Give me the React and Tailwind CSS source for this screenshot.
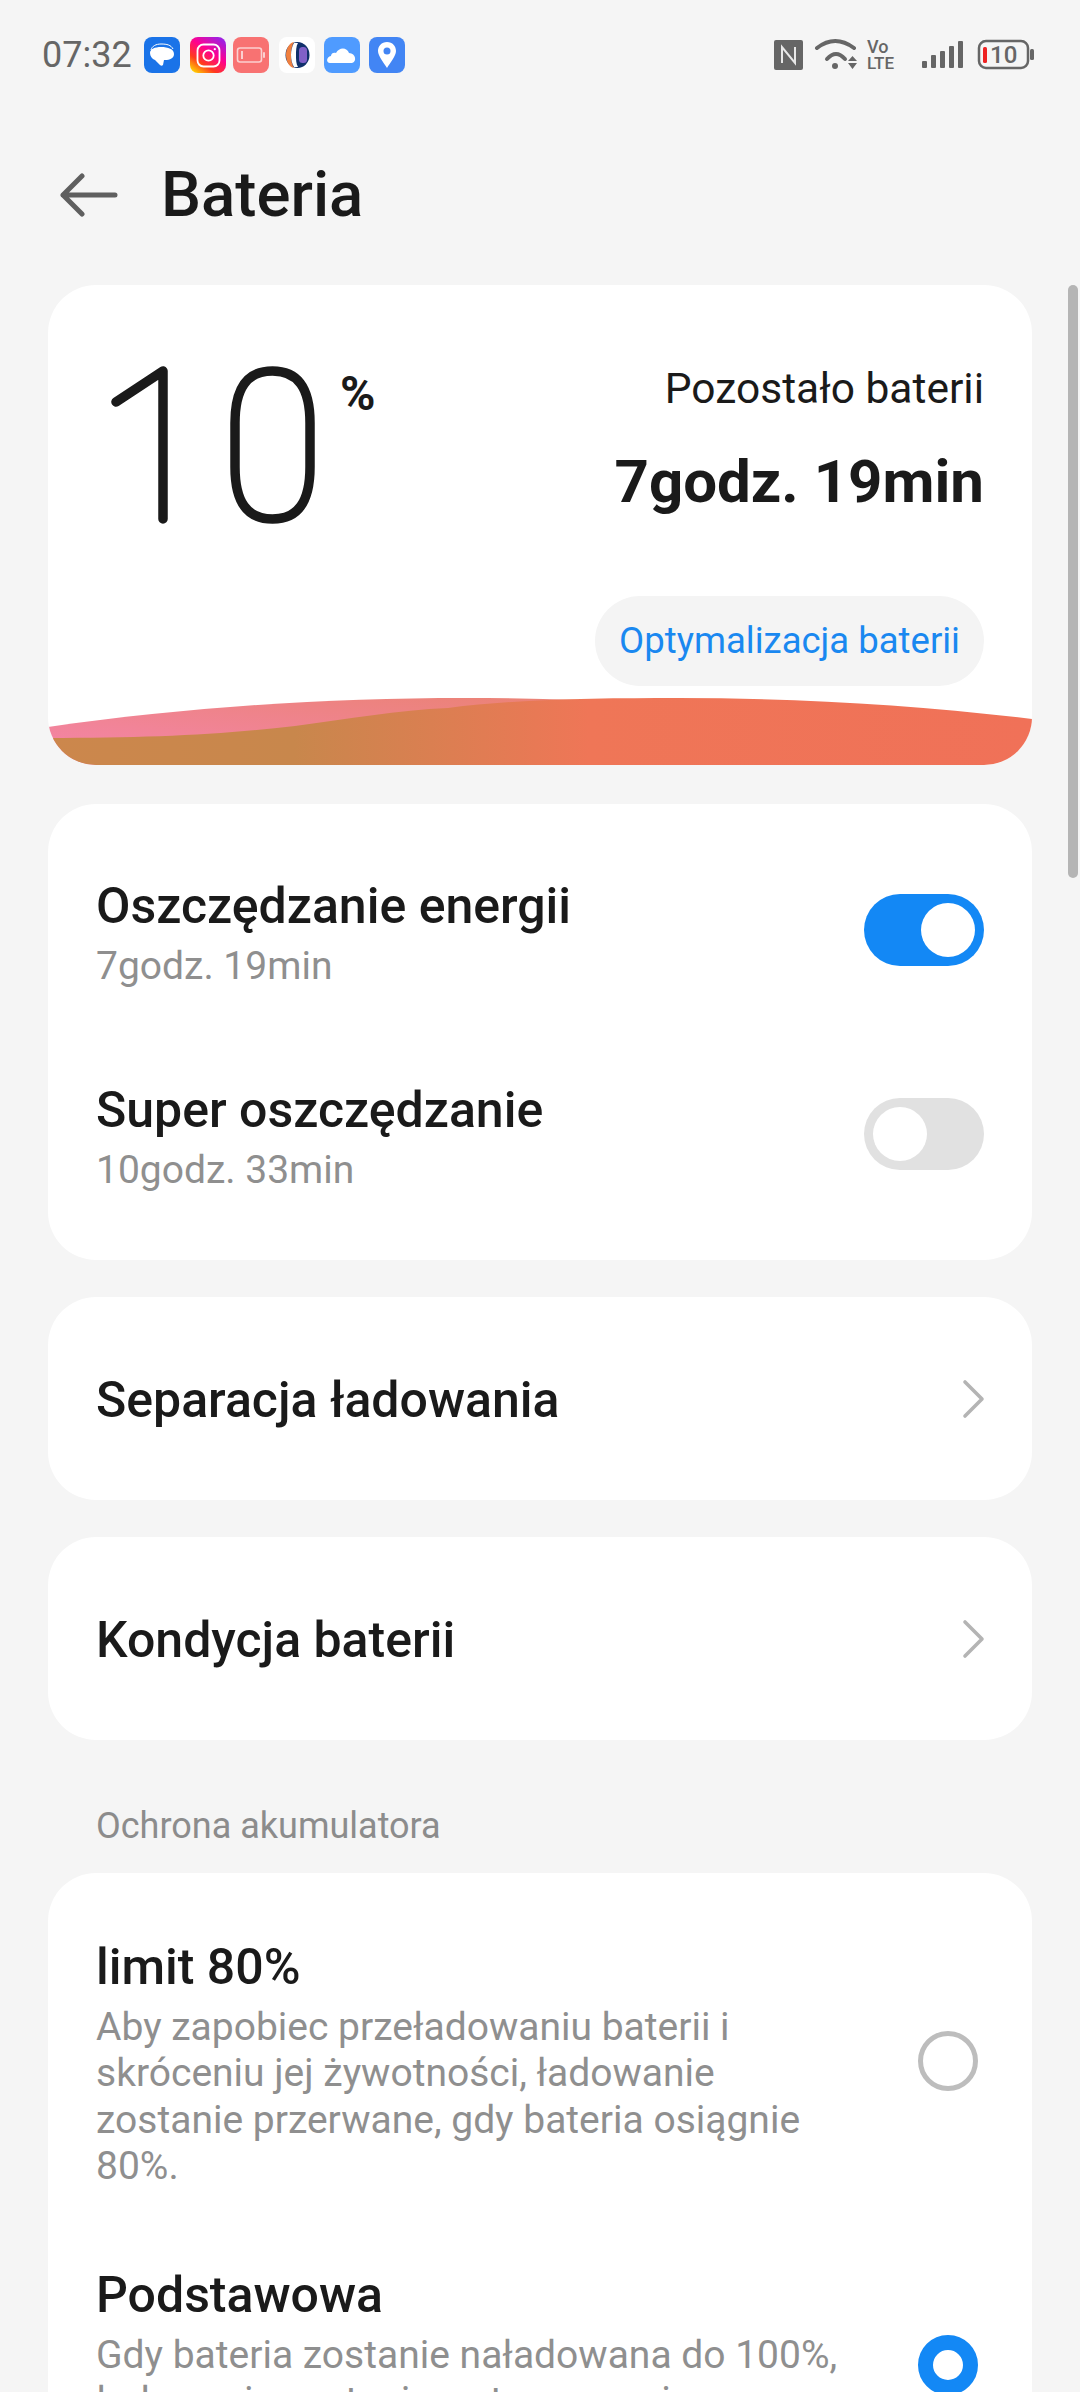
import React from "react";

const font = "font-['Roboto',sans-serif]";

function AppBadge({ className, children }) {
  return (
    <div className={`w-[36px] h-[36px] rounded-[8px] flex items-center justify-center overflow-hidden ${className}`}>
      <svg width="36" height="36" viewBox="0 0 36 36">{children}</svg>
    </div>
  );
}

function StatusBar() {
  return (
    <div className="h-[110px] pl-[42px] pr-[44px] flex items-center justify-between">
      <div className="flex items-center">
        <span className="text-[36px] leading-none text-[#666666] w-[102px]">07:32</span>
        <div className="flex items-center">
          <AppBadge className="bg-[#1a73e8]">
            <path d="M7 13c1-4 5-6 10-6 6 0 10 1 12 5" fill="none" stroke="#fff" strokeWidth="1" />
            <path d="M6 16c0-4 5-6 11-6 7 0 13 2 13 7 0 4-4 6-9 6l-1 0-1 5c-1 1-2 1-3 0l-5-5c-3-1-5-4-5-7z" fill="#fff" />
          </AppBadge>
          <div className="w-[10px]" />
          <div className="w-[36px] h-[36px] rounded-[8px] bg-[linear-gradient(35deg,#ffd600_5%,#ff3a1f_30%,#ff0090_58%,#a020e0_90%)] flex items-center justify-center">
            <svg width="25" height="25" viewBox="0 0 25 25" fill="none" stroke="#fff" strokeWidth="1.8">
              <rect x="1.5" y="1.5" width="22" height="22" rx="6" />
              <circle cx="12.5" cy="12.5" r="5.2" />
              <circle cx="18.8" cy="6.2" r="1.1" fill="#fff" stroke="none" />
            </svg>
          </div>
          <div className="w-[7px]" />
          <AppBadge className="bg-[#f87272]">
            <rect x="4.5" y="11" width="24" height="14" rx="2.5" fill="none" stroke="#fbd0d0" strokeWidth="1.6" />
            <rect x="8" y="14" width="2" height="8" fill="#fbd0d0" />
            <rect x="30" y="15" width="2" height="6" rx="1" fill="#fbd0d0" />
          </AppBadge>
          <div className="w-[10px]" />
          <AppBadge className="bg-white">
            <ellipse cx="18.5" cy="18" rx="12" ry="13" fill="#10306b" />
            <path d="M15 5c-5 1-8 7-8 13s3 12 8 13c-2-3-3-8-3-13s1-10 3-13z" fill="#f08040" />
            <path d="M15 6c-2 3-3 8-3 12s1 9 3 12h4c-2-3-2-8-2-12s0-9 2-12z" fill="#fff" />
            <rect x="20" y="10" width="8" height="16" rx="3.5" fill="#8060c8" />
          </AppBadge>
          <div className="w-[9px]" />
          <AppBadge className="bg-[#4f9bff]">
            <path d="M6 26c-4 0-4-6 1-7 0-3 3-4 5-3 3-6 11-6 13 0 7 0 8 9 3 10z" fill="#fff" />
          </AppBadge>
          <div className="w-[9px]" />
          <AppBadge className="bg-[#4285f4]">
            <path d="M18 5c-5.500 0-9 4-9 9 0 5 6 12 9 17 3-5 9-12 9-17 0-5-3.500-9-9-9z" fill="#fff" />
            <circle cx="18" cy="14" r="3.500" fill="#4285f4" />
          </AppBadge>
        </div>
      </div>
      <svg width="262" height="36" viewBox="0 0 262 36">
        <rect x="0" y="3" width="29" height="30" rx="2" fill="#666666" />
        <path d="M8 26V10l13 16V10" fill="none" stroke="#e8e8e8" strokeWidth="2" />
        <path d="M43 11Q61 -3 80 11" fill="none" stroke="#666666" strokeWidth="4" strokeLinecap="round" />
        <path d="M53 22Q62 12 71 22" fill="none" stroke="#666666" strokeWidth="4" strokeLinecap="round" />
        <circle cx="61" cy="29" r="3" fill="#666666" />
        <path d="M74 24l4.500-5 4.500 5zM74 26l4.500 6 4.500-6z" fill="#666666" />
        <text x="93" y="16" fontFamily="Roboto, sans-serif" fontSize="18" fontWeight="500" fill="#666666">Vo</text>
        <text x="93" y="32" fontFamily="Roboto, sans-serif" fontSize="17" fontWeight="500" fill="#666666">LTE</text>
        <rect x="148" y="24" width="5" height="7" rx="1" fill="#666666" />
        <rect x="157" y="18" width="5" height="13" rx="1" fill="#666666" />
        <rect x="166" y="14" width="5" height="17" rx="1" fill="#666666" />
        <rect x="175" y="9" width="5" height="22" rx="1" fill="#666666" />
        <rect x="184" y="4" width="5" height="27" rx="1" fill="#666666" />
        <rect x="205" y="4" width="49" height="27" rx="7" fill="none" stroke="#666666" strokeWidth="2.500" />
        <rect x="209" y="10" width="4" height="16" rx="1.500" fill="#ee2222" />
        <text x="216" y="26" fontFamily="Roboto, sans-serif" fontSize="24" fontWeight="500" fill="#666666">10</text>
        <rect x="256" y="12" width="4" height="11" rx="1.500" fill="#666666" />
      </svg>
    </div>
  );
}

function Wave() {
  return (
    <svg viewBox="0 0 984 70" preserveAspectRatio="none" className="absolute left-0 bottom-0 w-full h-[70px]">
      <defs>
        <linearGradient id="pink" x1="0" x2="1" y1="1" y2="0">
          <stop offset="0" stopColor="#f585ad" />
          <stop offset="1" stopColor="#ea8270" />
        </linearGradient>
        <linearGradient id="orange" x1="0" x2="1" y1="0" y2="0">
          <stop offset="0" stopColor="#cc874c" />
          <stop offset="0.25" stopColor="#c8874c" />
          <stop offset="0.55" stopColor="#ef7657" />
          <stop offset="1" stopColor="#f07158" />
        </linearGradient>
      </defs>
      <path d="M0 32C140 12 280 3 417 3 480 3 540 5 600 8V70H0Z" fill="url(#pink)" />
      <path d="M0 43C100 43 170 40 247 31 300 24 350 15 400 13 470 4 550 3 630 3 750 3 870 10 984 24V70H0Z" fill="url(#orange)" />
    </svg>
  );
}

function HeroCard() {
  return (
    <div className="relative mx-[48px] mt-[5px] h-[480px] bg-white rounded-[48px] overflow-hidden">
      <div className="flex justify-between pr-[48px]">
        <div className="pl-[56px] pt-[76px] flex items-start">
          <svg width="216" height="170" viewBox="0 0 216 170" fill="none" stroke="#1a1a1a" strokeLinecap="round" strokeLinejoin="round" strokeWidth="9.500">
            <path d="M12 41L59 10V158" />
            <path d="M131 62c0-35 12-52 37.500-52s37.500 17 37.500 52v44c0 35-12 52-37.500 52s-37.500-17-37.500-52z" />
          </svg>
          <span className="ml-[20px] mt-[9px] text-[48px] leading-none font-bold text-[#1a1a1a]">%</span>
        </div>
        <div className="pt-[82px] text-right text-[#1a1a1a]">
          <div className="text-[42.500px] leading-[44px]">Pozostało baterii</div>
          <div className="mt-[39px] text-[60px] leading-[64px] font-bold">7godz. 19min</div>
        </div>
      </div>
      <div className="absolute right-[48px] top-[311px] h-[90px] px-[24px] rounded-full bg-[#f4f4f4] flex items-center text-[36.500px] text-[#1a88f0]">
        Optymalizacja baterii
      </div>
      <Wave />
    </div>
  );
}

function Toggle({ on }) {
  return (
    <div className={`w-[120px] h-[72px] rounded-full p-[9px] flex ${on ? "bg-[#1388f5] justify-end" : "bg-[#e1e1e1] justify-start"}`}>
      <div className="w-[54px] h-[54px] rounded-full bg-white" />
    </div>
  );
}

function ToggleRow({ title, sub, on }) {
  return (
    <div className="h-[204px] px-[48px] flex items-center justify-between">
      <div className="pt-[6px]">
        <div className="text-[50px] leading-[56px] font-medium text-[#1a1a1a]">{title}</div>
        <div className="mt-[10px] text-[39px] leading-[44px] text-[#8f8f8f]">{sub}</div>
      </div>
      <Toggle on={on} />
    </div>
  );
}

function LinkCard({ title, className }) {
  return (
    <div className={`mx-[48px] h-[203px] bg-white rounded-[48px] pl-[48px] pr-[46px] flex items-center justify-between ${className}`}>
      <span className="pt-[3px] text-[50px] font-medium text-[#1a1a1a]">{title}</span>
      <svg width="24" height="40" viewBox="0 0 24 40" fill="none" stroke="#b4b4b4" strokeWidth="3.600" strokeLinecap="round" strokeLinejoin="round">
        <path d="M3 3L20 20L3 37" />
      </svg>
    </div>
  );
}

function Radio({ on }) {
  if (on) return <div className="w-[60px] h-[60px] mb-[8px] rounded-full border-[15px] border-[#1388f5] bg-white shrink-0" />;
  return <div className="w-[60px] h-[60px] mb-[8px] rounded-full border-[5px] border-[#bdbdbd] shrink-0" />;
}

function RadioRow({ title, text, on, className }) {
  return (
    <div className={`flex items-center justify-between pl-[48px] pr-[54px] ${className}`}>
      <div className="w-[760px]">
        <div className="text-[50px] leading-[54px] font-medium text-[#1a1a1a]">{title}</div>
        <div className="mt-[10px] text-[39px] leading-[46.400px] text-[#8f8f8f]">{text}</div>
      </div>
      <Radio on={on} />
    </div>
  );
}

export default function App() {
  return (
    <div className={`relative w-[1080px] h-[2392px] overflow-hidden bg-[#f5f5f5] ${font}`}>
      <StatusBar />
      <div className="h-[170px] flex items-center pl-[60px]">
        <svg width="58" height="44" viewBox="0 0 58 44" fill="none" stroke="#5f5f5f" strokeWidth="5" strokeLinecap="round" strokeLinejoin="round">
          <path d="M55 22H3M22 3L3 22l19 19" />
        </svg>
        <span className="ml-[43px] text-[63.500px] font-medium text-[#1a1a1a]">Bateria</span>
      </div>

      <HeroCard />

      <div className="mx-[48px] mt-[39px] py-[24px] bg-white rounded-[48px]">
        <ToggleRow title="Oszczędzanie energii" sub="7godz. 19min" on />
        <ToggleRow title="Super oszczędzanie" sub="10godz. 33min" />
      </div>

      <LinkCard title="Separacja ładowania" className="mt-[37px]" />
      <LinkCard title="Kondycja baterii" className="mt-[37px]" />

      <div className="mt-[66px] pl-[96px] text-[36px] leading-[40px] text-[#8c8c8c]">Ochrona akumulatora</div>

      <div className="mx-[48px] mt-[27px] pt-[67px] bg-white rounded-t-[48px]">
        <RadioRow
          title="limit 80%"
          text="Aby zapobiec przeładowaniu baterii i skróceniu jej żywotności, ładowanie zostanie przerwane, gdy bateria osiągnie 80%."
        />
        <RadioRow
          className="mt-[78px]"
          title="Podstawowa"
          text="Gdy bateria zostanie naładowana do 100%, ładowanie zostanie wstrzymane i wznowione, gdy poziom spadnie."
          on
        />
      </div>

      {/* scrollbar */}
      <div className="absolute left-[1068px] top-[285px] w-[10px] h-[593px] rounded-full bg-[#b5b5b5]" />
    </div>
  );
}
